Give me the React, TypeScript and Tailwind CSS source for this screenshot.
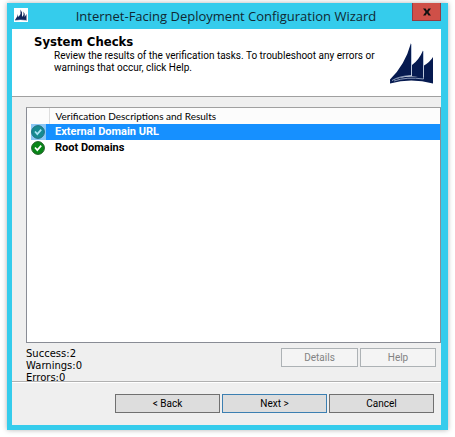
import type { ButtonHTMLAttributes } from "react";

const CHECKS = [
  { name: "External Domain URL", selected: true },
  { name: "Root Domains", selected: false },
];

const SUMMARY = [
  { label: "Success", count: 2 },
  { label: "Warnings", count: 0 },
  { label: "Errors", count: 0 },
];

const BUTTON_STYLES = {
  normal: "border-[#707070] bg-[#dddddd] text-black",
  primary: "border-[#3c7fb1] bg-[#dddddd] text-black",
  disabled: "border-[#adb2b5] bg-[#f4f4f4] text-[#838383]",
};

type WizardButtonProps = ButtonHTMLAttributes<HTMLButtonElement> & {
  look?: keyof typeof BUTTON_STYLES;
};

function WizardButton({ look = "normal", className = "", ...props }: WizardButtonProps) {
  return (
    <button
      type="button"
      className={`h-[19px] border text-[10px] leading-4 ${BUTTON_STYLES[look]} ${className}`}
      {...props}
    />
  );
}

function AppIcon() {
  return (
    <svg viewBox="0 0 14 14" className="size-3.5 bg-white" aria-hidden="true">
      <path d="M1 12 3.500 8V6l1 3 2-3V1.500l1.500 3V9l1.500-2V3.500l1.200 2.500v3l1.800-3v6z" fill="#12265a" />
      <path d="M1 12.500Q6 10.500 13 12.500" fill="none" stroke="#7385a8" strokeWidth="0.600" />
    </svg>
  );
}

function CloseIcon() {
  return (
    <svg viewBox="0 0 8 8" className="size-2" aria-hidden="true">
      <path d="M0 0.500H2.600L4 2.700 5.400 0.500H8L5.400 4 8 7.500H5.400L4 5.300 2.600 7.500H0L2.600 4Z" fill="#111111" />
    </svg>
  );
}

function SailsLogo() {
  return (
    <svg viewBox="0 0 43 41" className="h-[41px] w-[43px]" aria-hidden="true">
      <path d="M21 0V32.500Q9 33.500 0 39V36.500Q15 22 21 0Z" fill="#061a50" />
      <path d="M33 7.500V36Q28 33.500 22 33V22Q29 17 33 7.500Z" fill="#061a50" />
      <path d="M43 14V40L34 37V22.500Q40 19 43 14Z" fill="#061a50" />
      <path d="M0 38.500Q17 30 43 36V40.500Q21 34.500 0 40.500Z" fill="#061a50" />
      <path d="M21.500 1V32.500Q9 33 2 37.500M33.500 8V36Q17 33.500 4 38" fill="none" stroke="#a9b9d2" strokeWidth="0.800" />
    </svg>
  );
}

function StatusIcon({ selected }: { selected: boolean }) {
  return (
    <svg viewBox="0 0 14 14" className="size-3.5" role="img" aria-label="Success">
      <circle cx="7" cy="7" r="6.400" fill={selected ? "#168a91" : "#078617"} stroke={selected ? "#24727e" : "#235c28"} />
      <path d="M4 6.500l2.300 2.600L10.200 4.600" fill="none" stroke={selected ? "#a9e4f5" : "#ffffff"} strokeWidth="1.700" />
    </svg>
  );
}

export default function App() {
  return (
    <div className="min-h-screen bg-white pt-[3px] pr-[7px] pb-[7px] pl-[7px] font-['Roboto','Liberation_Sans',sans-serif] text-black">
      <div className="flex min-h-[427px] flex-col bg-[#35ccec] pr-[7px] pb-[5px] pl-[5px] shadow-[0_0_5px_rgba(0,0,0,0.3)]">
        {/* Title bar */}
        <div className="flex h-[26px] items-start">
          <div className="pt-[5px] pl-0.5">
            <AppIcon />
          </div>
          <h1 className="flex-1 pl-3 text-center font-['Open_Sans','Noto_Sans',sans-serif] text-[13px] leading-[26px] whitespace-nowrap text-[#102833]">
            Internet-Facing Deployment Configuration Wizard
          </h1>
          <button
            type="button"
            aria-label="Close"
            className="flex h-[18px] w-[29px] items-center justify-center border border-t-0 border-[#943a43] bg-[#cf5048]"
          >
            <CloseIcon />
          </button>
        </div>

        <main className="flex flex-1 flex-col bg-[#efefef]">
          {/* Page heading */}
          <header className="flex h-[68px] justify-between border-b border-[#a0a0a0] bg-white pr-2 pl-[22px]">
            <div className="min-w-0 pt-[5px]">
              <h2 className="font-['DejaVu_Sans_Condensed','DejaVu_Sans',sans-serif] text-[13px] leading-4 font-bold">
                System Checks
              </h2>
              <p className="pl-5 text-[10px] leading-3 whitespace-nowrap">
                Review the results of the verification tasks. To troubleshoot any errors or
                <br />
                warnings that occur, click Help.
              </p>
            </div>
            <div className="shrink-0 pt-3.5">
              <SailsLogo />
            </div>
          </header>

          {/* Results */}
          <div className="flex flex-1 pt-2.5 pl-3.5">
            <div className="flex-1 border border-[#898c95] border-t-[#a0a0a0] bg-white">
              <table className="w-full table-fixed border-collapse text-left">
                <colgroup>
                  <col className="w-[22px]" />
                  <col />
                </colgroup>
                <thead>
                  <tr className="h-4 bg-[#fcfcfc] font-['Lato','Liberation_Sans',sans-serif] text-[10px] leading-4">
                    <th className="border-r border-[#dedede] p-0" aria-label="Status" />
                    <th className="p-0 pt-px pl-1.5 leading-[15px] font-normal">
                      Verification Descriptions and Results
                    </th>
                  </tr>
                </thead>
                <tbody>
                  {CHECKS.map(({ name, selected }) => (
                    <tr key={name} className="h-4 text-[11px] leading-4">
                      <td className={`p-0 pl-1 ${selected ? "bg-linear-to-r from-white from-[5px] to-[#1690ff] to-[5px]" : ""}`}>
                        <div className={`h-4 w-[15px] pt-px ${selected ? "bg-[#8bc7f5]" : ""}`}>
                          <StatusIcon selected={selected} />
                        </div>
                      </td>
                      <td className={`p-0 pl-1.5 font-bold ${selected ? "bg-[#1690ff] text-white" : ""}`}>
                        {name}
                      </td>
                    </tr>
                  ))}
                </tbody>
              </table>
            </div>
          </div>

          {/* Summary */}
          <div className="flex h-[38px] items-start justify-between pt-[5px] pr-[5px] pl-3.5">
            <ul className="font-['DejaVu_Sans',Verdana,sans-serif] text-[10px] leading-[12px]">
              {SUMMARY.map(({ label, count }) => (
                <li key={label}>
                  {label}:{count}
                </li>
              ))}
            </ul>
            <div className="flex gap-0.5">
              <WizardButton look="disabled" className="w-[77px]" disabled>
                Details
              </WizardButton>
              <WizardButton look="disabled" className="w-[76px]" disabled>
                Help
              </WizardButton>
            </div>
          </div>

          {/* Navigation */}
          <footer className="flex h-11 justify-end gap-0.5 border-t border-[#b0b0b0] pt-3 pr-[7px] shadow-[inset_0_1px_0_#ffffff]">
            <WizardButton className="w-[105px]">&lt; Back</WizardButton>
            <WizardButton look="primary" className="w-[105px]">
              Next &gt;
            </WizardButton>
            <WizardButton className="w-[105px]">Cancel</WizardButton>
          </footer>
        </main>
      </div>
    </div>
  );
}
